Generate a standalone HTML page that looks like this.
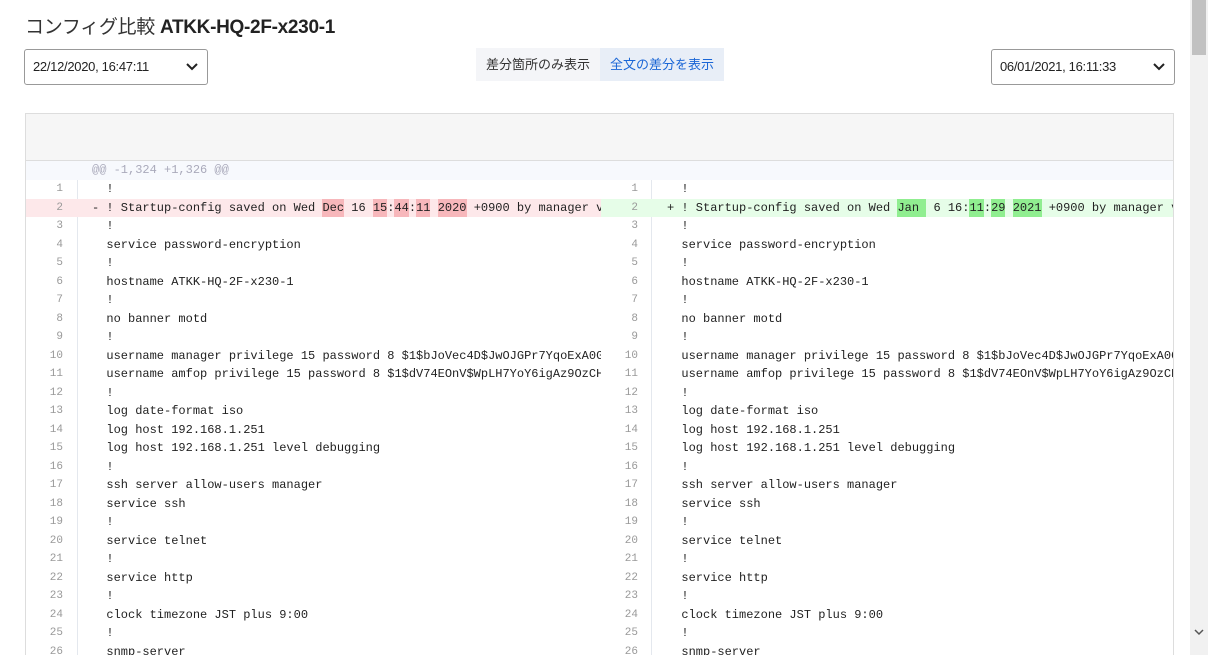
<!DOCTYPE html>
<html><head><meta charset="utf-8"><style>
*{box-sizing:border-box;margin:0;padding:0}
html,body{width:1208px;height:655px;overflow:hidden}
body{background:#fff;font-family:"Liberation Sans","Noto Sans CJK JP",sans-serif;color:#222;position:relative}
h1{position:absolute;left:25px;top:12px;font-size:19px;font-weight:normal;color:#333;letter-spacing:-0.3px}
h1 b{font-weight:bold;color:#222}
.sel{position:absolute;top:49px;height:36px;border:1px solid #999;border-radius:3px;font-size:13px;padding:0 0 0 8px;line-height:34px;color:#222;letter-spacing:-0.3px}
.sel svg{position:absolute;right:8px;top:12px}
.btn{position:absolute;top:48px;height:33px;line-height:33px;font-size:13px;padding:0 10px}
.wrap{position:absolute;left:25px;top:113px;width:1149px;height:542px;border:1px solid #ddd;border-bottom:none;overflow:hidden}
.hdr{height:47px;background:#f6f6f6;border-bottom:1px solid #ddd}
.hunk{position:absolute;left:0;top:47px;width:1149px;height:19px;background:#f7f9fd;font:12px "Liberation Mono",monospace;color:#aab;line-height:19px;padding-left:66px}
.pane{position:absolute;top:66px;height:500px;overflow:hidden}
.row{height:18.5px;line-height:18.5px;font:12px/18.5px "Liberation Mono",monospace;white-space:pre;position:relative;color:#222}
.num{position:absolute;left:0;top:0;width:37px;text-align:right;color:#999;font-size:11px}
.div{position:absolute;top:0;bottom:0;width:1px;background:#e4e8ee}
.txt{position:absolute;left:66px;top:0}
.hl{display:inline-block;height:18.5px;vertical-align:top}
.del{background:#fde8ea}
.del .hl{background:#f7b7bb}
.add{background:#e6fde8}
.add .hl{background:#90ee90}
.sb{position:absolute;right:0;top:0;width:18px;height:655px;background:#f1f1f1}
.thumb{position:absolute;right:2px;top:0;width:14px;height:55px;background:#c1c1c1}
</style></head><body>
<h1>コンフィグ比較 <b>ATKK-HQ-2F-x230-1</b></h1>
<div class="sel" style="left:24px;width:184px">22/12/2020, 16:47:11<svg width="14" height="10" viewBox="0 0 14 10"><path d="M2 2l5 5 5-5" stroke="#222" stroke-width="2" fill="none"/></svg></div>
<div class="btn" style="left:476px;width:124px;background:#f4f5f8;color:#333">差分箇所のみ表示</div>
<div class="btn" style="left:600px;width:124px;background:#e8eef7;color:#1a66d6">全文の差分を表示</div>
<div class="sel" style="left:991px;width:184px">06/01/2021, 16:11:33<svg width="14" height="10" viewBox="0 0 14 10"><path d="M2 2l5 5 5-5" stroke="#222" stroke-width="2" fill="none"/></svg></div>
<div class="wrap">
<div class="hdr"></div>
<div class="hunk">@@ -1,324 +1,326 @@</div>
<div class="pane" style="left:0;width:575px">
<div class="div" style="left:51px"></div>
<div class="row"><span class="num">1</span><span class="txt">  !</span></div>
<div class="row del"><span class="num">2</span><span class="txt">- ! Startup-config saved on Wed <span class="hl">Dec</span> 16 <span class="hl">15</span>:<span class="hl">44</span>:<span class="hl">11</span> <span class="hl">2020</span> +0900 by manager via</span></div>
<div class="row"><span class="num">3</span><span class="txt">  !</span></div>
<div class="row"><span class="num">4</span><span class="txt">  service password-encryption</span></div>
<div class="row"><span class="num">5</span><span class="txt">  !</span></div>
<div class="row"><span class="num">6</span><span class="txt">  hostname ATKK-HQ-2F-x230-1</span></div>
<div class="row"><span class="num">7</span><span class="txt">  !</span></div>
<div class="row"><span class="num">8</span><span class="txt">  no banner motd</span></div>
<div class="row"><span class="num">9</span><span class="txt">  !</span></div>
<div class="row"><span class="num">10</span><span class="txt">  username manager privilege 15 password 8 $1$bJoVec4D$JwOJGPr7YqoExA0G</span></div>
<div class="row"><span class="num">11</span><span class="txt">  username amfop privilege 15 password 8 $1$dV74EOnV$WpLH7YoY6igAz9OzCH</span></div>
<div class="row"><span class="num">12</span><span class="txt">  !</span></div>
<div class="row"><span class="num">13</span><span class="txt">  log date-format iso</span></div>
<div class="row"><span class="num">14</span><span class="txt">  log host 192.168.1.251</span></div>
<div class="row"><span class="num">15</span><span class="txt">  log host 192.168.1.251 level debugging</span></div>
<div class="row"><span class="num">16</span><span class="txt">  !</span></div>
<div class="row"><span class="num">17</span><span class="txt">  ssh server allow-users manager</span></div>
<div class="row"><span class="num">18</span><span class="txt">  service ssh</span></div>
<div class="row"><span class="num">19</span><span class="txt">  !</span></div>
<div class="row"><span class="num">20</span><span class="txt">  service telnet</span></div>
<div class="row"><span class="num">21</span><span class="txt">  !</span></div>
<div class="row"><span class="num">22</span><span class="txt">  service http</span></div>
<div class="row"><span class="num">23</span><span class="txt">  !</span></div>
<div class="row"><span class="num">24</span><span class="txt">  clock timezone JST plus 9:00</span></div>
<div class="row"><span class="num">25</span><span class="txt">  !</span></div>
<div class="row"><span class="num">26</span><span class="txt">  snmp-server</span></div>
</div>
<div class="pane" style="left:575px;width:574px">
<div class="div" style="left:50px"></div>
<div class="row"><span class="num">1</span><span class="txt">  !</span></div>
<div class="row add"><span class="num">2</span><span class="txt">+ ! Startup-config saved on Wed <span class="hl">Jan </span> 6 16:<span class="hl">11</span>:<span class="hl">29</span> <span class="hl">2021</span> +0900 by manager via</span></div>
<div class="row"><span class="num">3</span><span class="txt">  !</span></div>
<div class="row"><span class="num">4</span><span class="txt">  service password-encryption</span></div>
<div class="row"><span class="num">5</span><span class="txt">  !</span></div>
<div class="row"><span class="num">6</span><span class="txt">  hostname ATKK-HQ-2F-x230-1</span></div>
<div class="row"><span class="num">7</span><span class="txt">  !</span></div>
<div class="row"><span class="num">8</span><span class="txt">  no banner motd</span></div>
<div class="row"><span class="num">9</span><span class="txt">  !</span></div>
<div class="row"><span class="num">10</span><span class="txt">  username manager privilege 15 password 8 $1$bJoVec4D$JwOJGPr7YqoExA0G</span></div>
<div class="row"><span class="num">11</span><span class="txt">  username amfop privilege 15 password 8 $1$dV74EOnV$WpLH7YoY6igAz9OzCH</span></div>
<div class="row"><span class="num">12</span><span class="txt">  !</span></div>
<div class="row"><span class="num">13</span><span class="txt">  log date-format iso</span></div>
<div class="row"><span class="num">14</span><span class="txt">  log host 192.168.1.251</span></div>
<div class="row"><span class="num">15</span><span class="txt">  log host 192.168.1.251 level debugging</span></div>
<div class="row"><span class="num">16</span><span class="txt">  !</span></div>
<div class="row"><span class="num">17</span><span class="txt">  ssh server allow-users manager</span></div>
<div class="row"><span class="num">18</span><span class="txt">  service ssh</span></div>
<div class="row"><span class="num">19</span><span class="txt">  !</span></div>
<div class="row"><span class="num">20</span><span class="txt">  service telnet</span></div>
<div class="row"><span class="num">21</span><span class="txt">  !</span></div>
<div class="row"><span class="num">22</span><span class="txt">  service http</span></div>
<div class="row"><span class="num">23</span><span class="txt">  !</span></div>
<div class="row"><span class="num">24</span><span class="txt">  clock timezone JST plus 9:00</span></div>
<div class="row"><span class="num">25</span><span class="txt">  !</span></div>
<div class="row"><span class="num">26</span><span class="txt">  snmp-server</span></div>
</div>
</div>
<div class="sb"><div class="thumb"></div><svg style="position:absolute;left:4px;top:628px" width="10" height="8" viewBox="0 0 10 8"><path d="M1 2l4 4 4-4" stroke="#555" stroke-width="1.5" fill="none"/></svg></div>
</body></html>
